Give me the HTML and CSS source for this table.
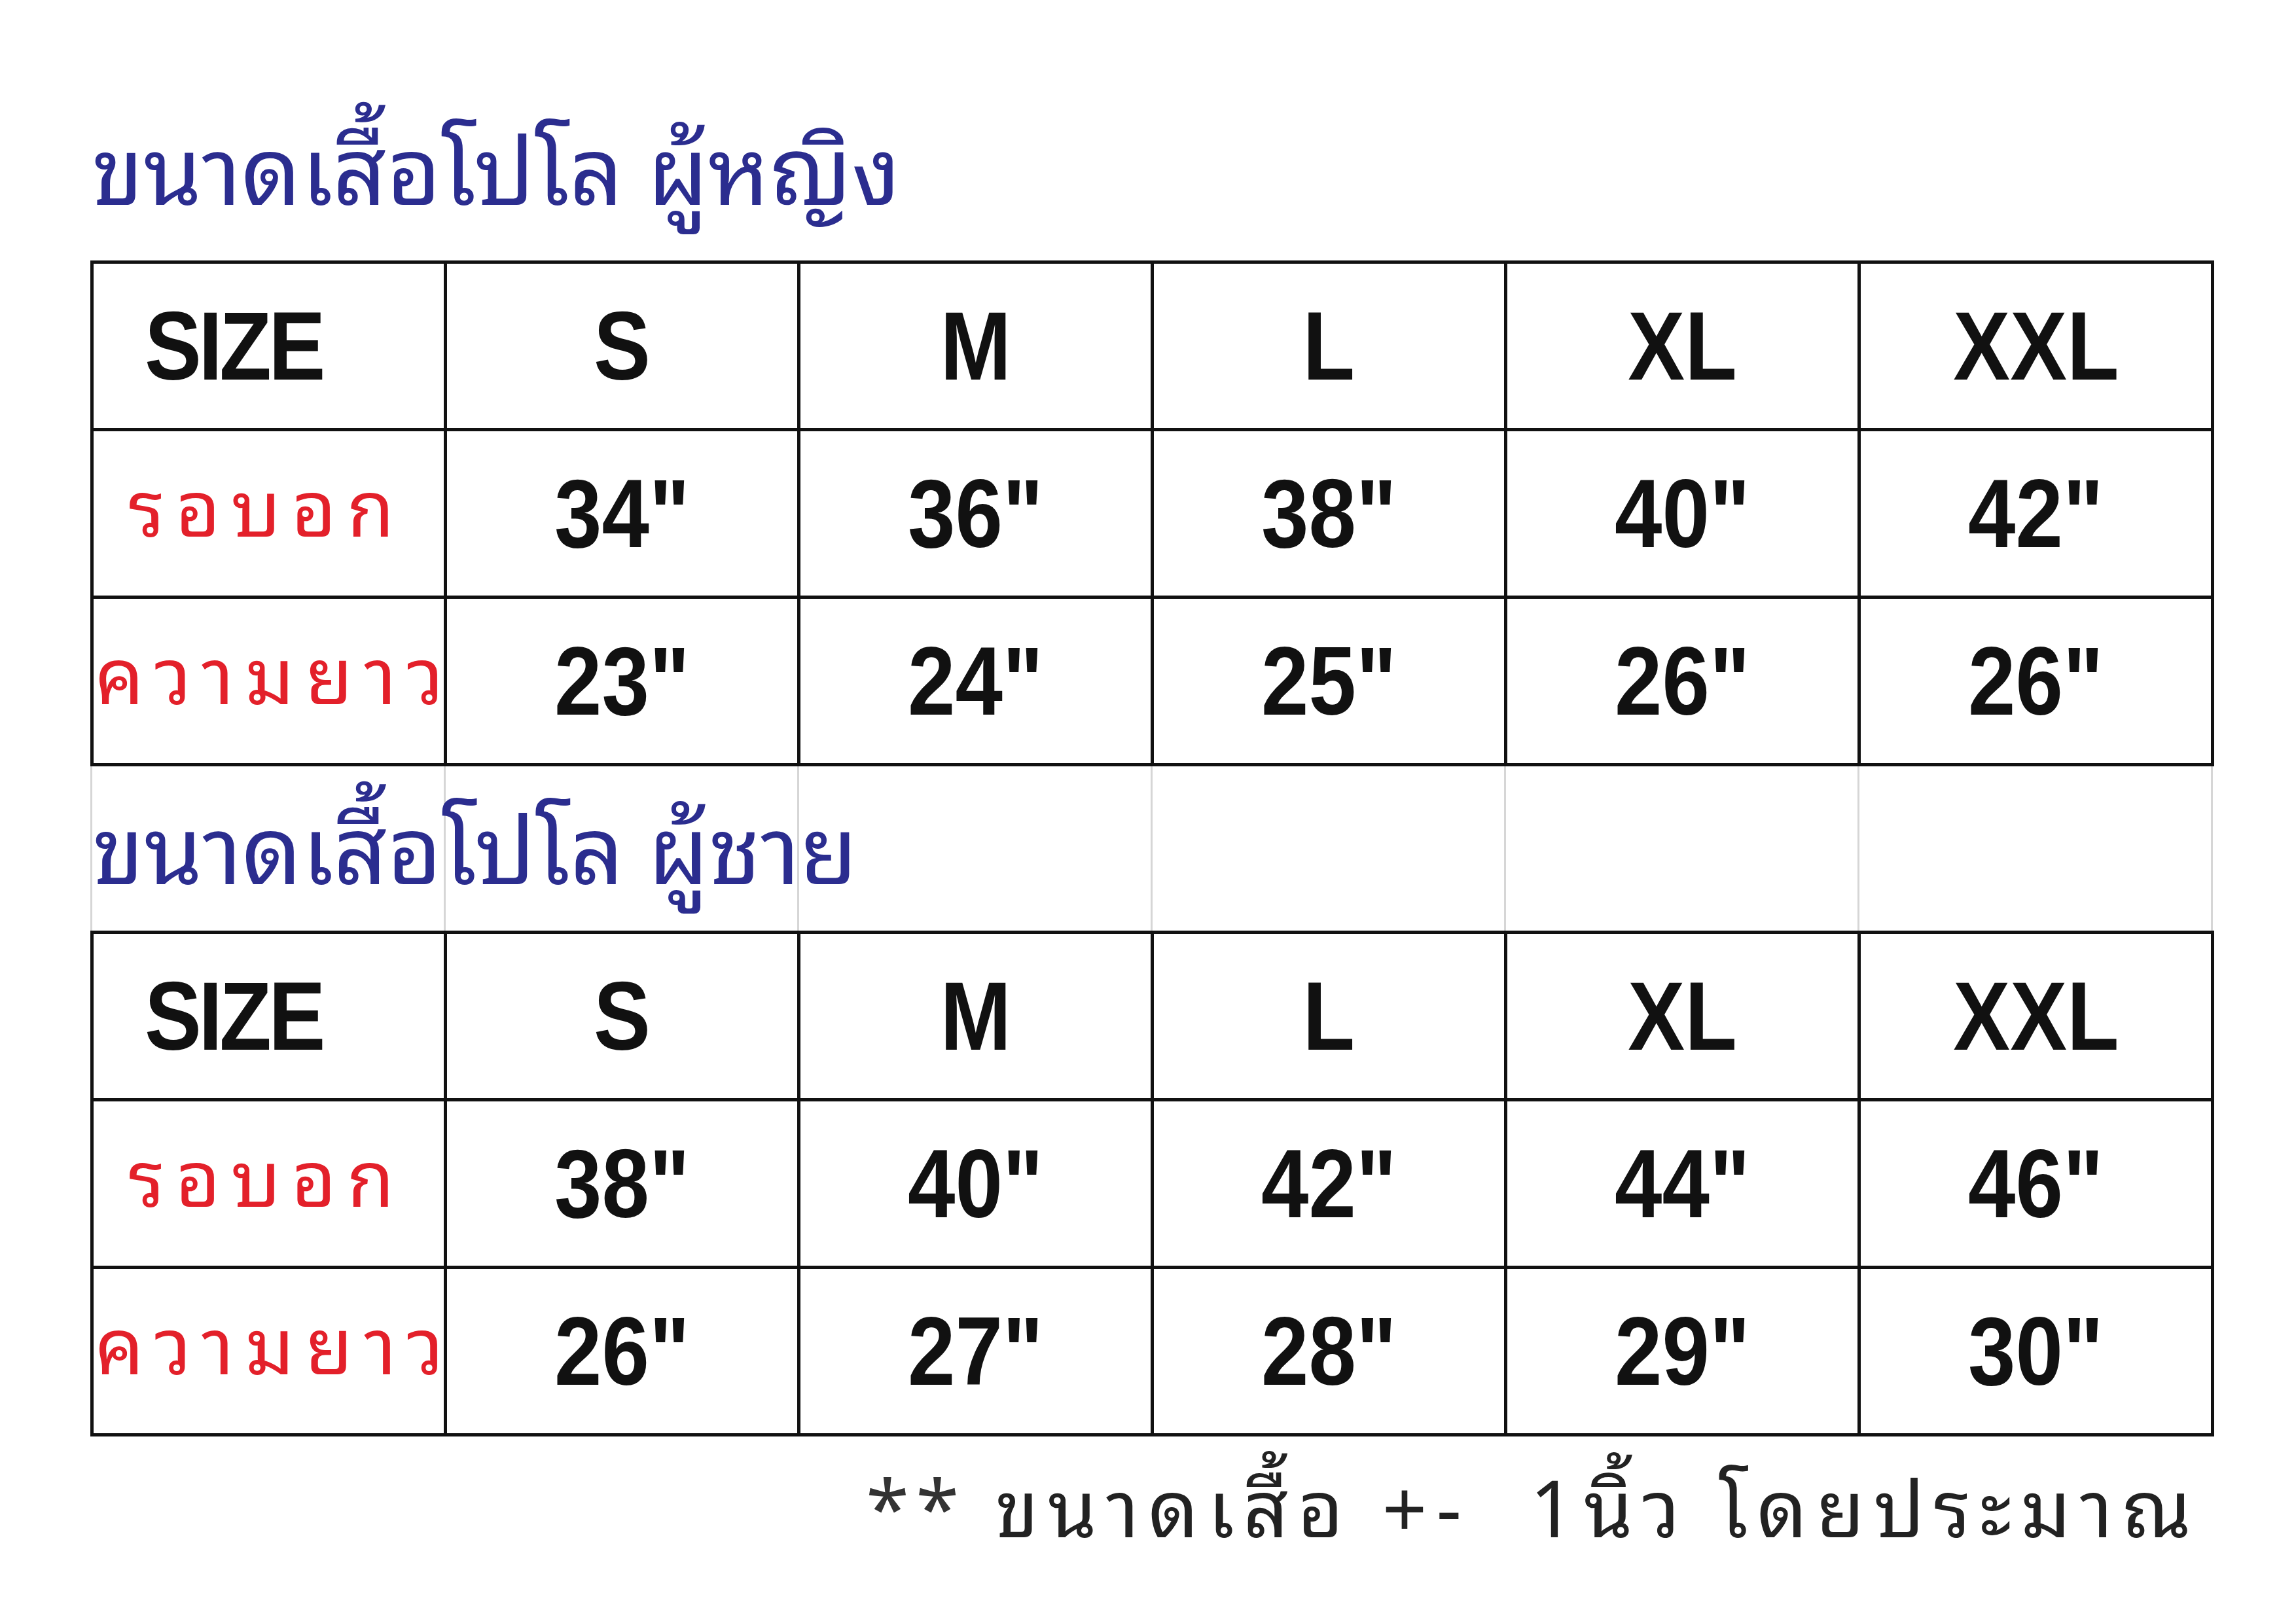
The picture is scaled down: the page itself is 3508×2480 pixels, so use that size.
FILE: index.html
```html
<!DOCTYPE html>
<html lang="th">
<head>
<meta charset="utf-8">
<title>ขนาดเสื้อโปโล</title>
<link rel="stylesheet" href="styles.css">
</head>
<body>
<div class="page">
  <h1 class="title title-top">ขนาดเสื้อโปโล ผู้หญิง</h1>
  <div class="chart">
    <div class="cell head first"><span class="t">SIZE</span></div>
    <div class="cell head"><span class="t">S</span></div>
    <div class="cell head"><span class="t">M</span></div>
    <div class="cell head"><span class="t">L</span></div>
    <div class="cell head"><span class="t">XL</span></div>
    <div class="cell head"><span class="t">XXL</span></div>
    <div class="cell label chest">รอบอก</div>
    <div class="cell num"><span class="t">34"</span></div>
    <div class="cell num"><span class="t">36"</span></div>
    <div class="cell num"><span class="t">38"</span></div>
    <div class="cell num"><span class="t">40"</span></div>
    <div class="cell num"><span class="t">42"</span></div>
    <div class="cell label length">ความยาว</div>
    <div class="cell num"><span class="t">23"</span></div>
    <div class="cell num"><span class="t">24"</span></div>
    <div class="cell num"><span class="t">25"</span></div>
    <div class="cell num"><span class="t">26"</span></div>
    <div class="cell num"><span class="t">26"</span></div>
  </div>
  <div class="band">
    <div class="gridcell"></div>
    <div class="gridcell"></div>
    <div class="gridcell"></div>
    <div class="gridcell"></div>
    <div class="gridcell"></div>
    <div class="gridcell"></div>
    <h2 class="title title-band">ขนาดเสื้อโปโล ผู้ชาย</h2>
  </div>
  <div class="chart">
    <div class="cell head first"><span class="t">SIZE</span></div>
    <div class="cell head"><span class="t">S</span></div>
    <div class="cell head"><span class="t">M</span></div>
    <div class="cell head"><span class="t">L</span></div>
    <div class="cell head"><span class="t">XL</span></div>
    <div class="cell head"><span class="t">XXL</span></div>
    <div class="cell label chest">รอบอก</div>
    <div class="cell num"><span class="t">38"</span></div>
    <div class="cell num"><span class="t">40"</span></div>
    <div class="cell num"><span class="t">42"</span></div>
    <div class="cell num"><span class="t">44"</span></div>
    <div class="cell num"><span class="t">46"</span></div>
    <div class="cell label length">ความยาว</div>
    <div class="cell num"><span class="t">26"</span></div>
    <div class="cell num"><span class="t">27"</span></div>
    <div class="cell num"><span class="t">28"</span></div>
    <div class="cell num"><span class="t">29"</span></div>
    <div class="cell num"><span class="t">30"</span></div>
  </div>
  <p class="note"><span class="stars">**</span> ขนาดเสื้อ +-&nbsp;&nbsp;1นิ้ว โดยประมาณ</p>
</div>
</body>
</html>
```
FILE: styles.css
```css
html, body {
  margin: 0;
  padding: 0;
  background: #ffffff;
}
body {
  width: 3508px;
  height: 2480px;
  overflow: hidden;
  font-family: "Noto Sans Thai Looped", "Noto Sans Thai", "Loma", "Garuda", "Liberation Sans", sans-serif;
}
.page {
  padding-left: 138px;
  width: 3250px;
}
.title {
  margin: 0;
  font-weight: normal;
  color: #2b2d8f;
  font-size: 143px;
  line-height: 1;
  white-space: nowrap;
}
.title-top {
  height: 398px;
  display: flex;
  align-items: flex-end;
  padding-bottom: 78px;
  box-sizing: border-box;
  padding-left: 2px;
}
.chart {
  display: grid;
  grid-template-columns: repeat(6, 540px);
  grid-template-rows: repeat(3, 256px);
  border-top: 5px solid #111;
  border-left: 5px solid #111;
  width: max-content;
}
.cell {
  border-right: 5px solid #111;
  border-bottom: 5px solid #111;
  display: flex;
  align-items: center;
  justify-content: center;
  box-sizing: border-box;
}
.head, .num {
  font-family: "Liberation Sans", Arial, sans-serif;
  font-weight: bold;
  font-size: 148px;
  color: #111;
  line-height: 1;
}
.t {
  display: inline-block;
  transform: scaleX(0.88);
  white-space: nowrap;
}
.head.first {
  justify-content: flex-start;
  padding-left: 78px;
}
.head.first .t {
  transform-origin: left center;
  letter-spacing: -5px;
}
.label {
  color: #e3202a;
  font-size: 118px;
  line-height: 1;
  white-space: nowrap;
  padding-bottom: 36px;
}
.chest {
  letter-spacing: 16px;
  padding-right: 6px;
}
.length {
  letter-spacing: 17px;
  justify-content: flex-start;
  padding-left: 2px;
}
.band {
  position: relative;
  display: grid;
  grid-template-columns: repeat(6, 540px);
  height: 251px;
  border-left: 3px solid #d6d6d6;
  width: max-content;
}
.gridcell {
  border-right: 3px solid #d6d6d6;
}
.title-band {
  position: absolute;
  left: 0;
  bottom: 64px;
}
.note {
  margin: 0;
  padding-top: 40px;
  text-align: right;
  padding-right: 26px;
  font-size: 120px;
  line-height: 1;
  letter-spacing: 14px;
  color: #222;
  white-space: nowrap;
}
.stars {
  color: #333;
  letter-spacing: 10px;
}
```
